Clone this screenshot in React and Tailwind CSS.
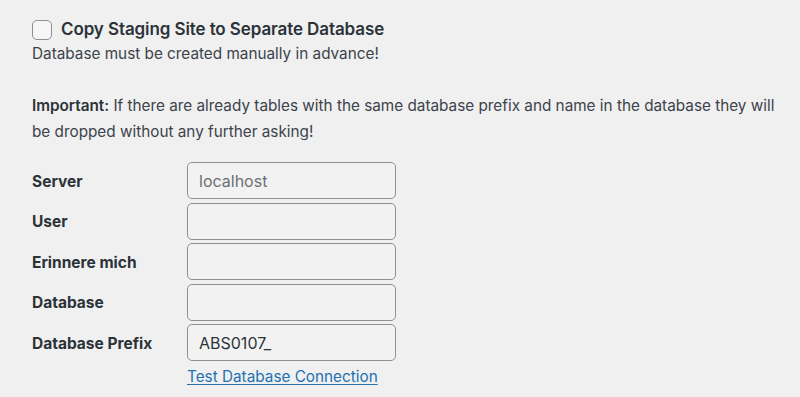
export default function App() {
  const fields = [
    { label: "Server", value: "localhost", muted: true },
    { label: "User", value: "" },
    { label: "Erinnere mich", value: "" },
    { label: "Database", value: "" },
    { label: "Database Prefix", value: "ABS0107_" },
  ];

  return (
    <div
      className="w-[800px] h-[397px] overflow-hidden bg-[#f0f0f1] text-[#3c434a] px-[32px] pt-[19px]"
      style={{ fontFamily: "Inter, 'Liberation Sans', sans-serif" }}
    >
      {/* Checkbox heading */}
      <label className="flex items-center gap-[9px] h-[21px]">
        <span className="w-[20px] h-[20px] rounded-[5px] border border-[#8c8f94] bg-[#f6f6f6] shrink-0" />
        <span className="text-[17px] font-semibold text-[#2c3338] tracking-[-0.1px]">
          Copy Staging Site to Separate Database
        </span>
      </label>
      <p className="mt-[3px] text-[15.3px] leading-[22px]">Database must be created manually in advance!</p>

      <p className="mt-[28px] text-[15.3px] leading-[26px] w-[760px]">
        <strong className="font-semibold text-[#2c3338]">Important:</strong> If there are already tables with the same
        database prefix and name in the database they will be dropped without any further asking!
      </p>

      {/* Connection fields */}
      <div className="mt-[17px] flex flex-col gap-[3.5px]">
        {fields.map((f) => (
          <div key={f.label} className="flex items-center">
            <div className="w-[155px] pt-[2px] text-[15.5px] font-bold text-[#2c3338]">{f.label}</div>
            <div
              className={`w-[209px] h-[37px] rounded-[5px] border border-[#8c8f94] bg-[#f2f2f2] px-[11px] flex items-center text-[16px] ${
                f.muted ? "text-[#6b6f74]" : "text-[#2c3338]"
              }`}
            >
              {f.value}
            </div>
          </div>
        ))}
      </div>
      <div className="pl-[155px] mt-[3px]">
        <a href="#" className="text-[15.3px] text-[#2271b1] underline underline-offset-[2px]">
          Test Database Connection
        </a>
      </div>
    </div>
  );
}
